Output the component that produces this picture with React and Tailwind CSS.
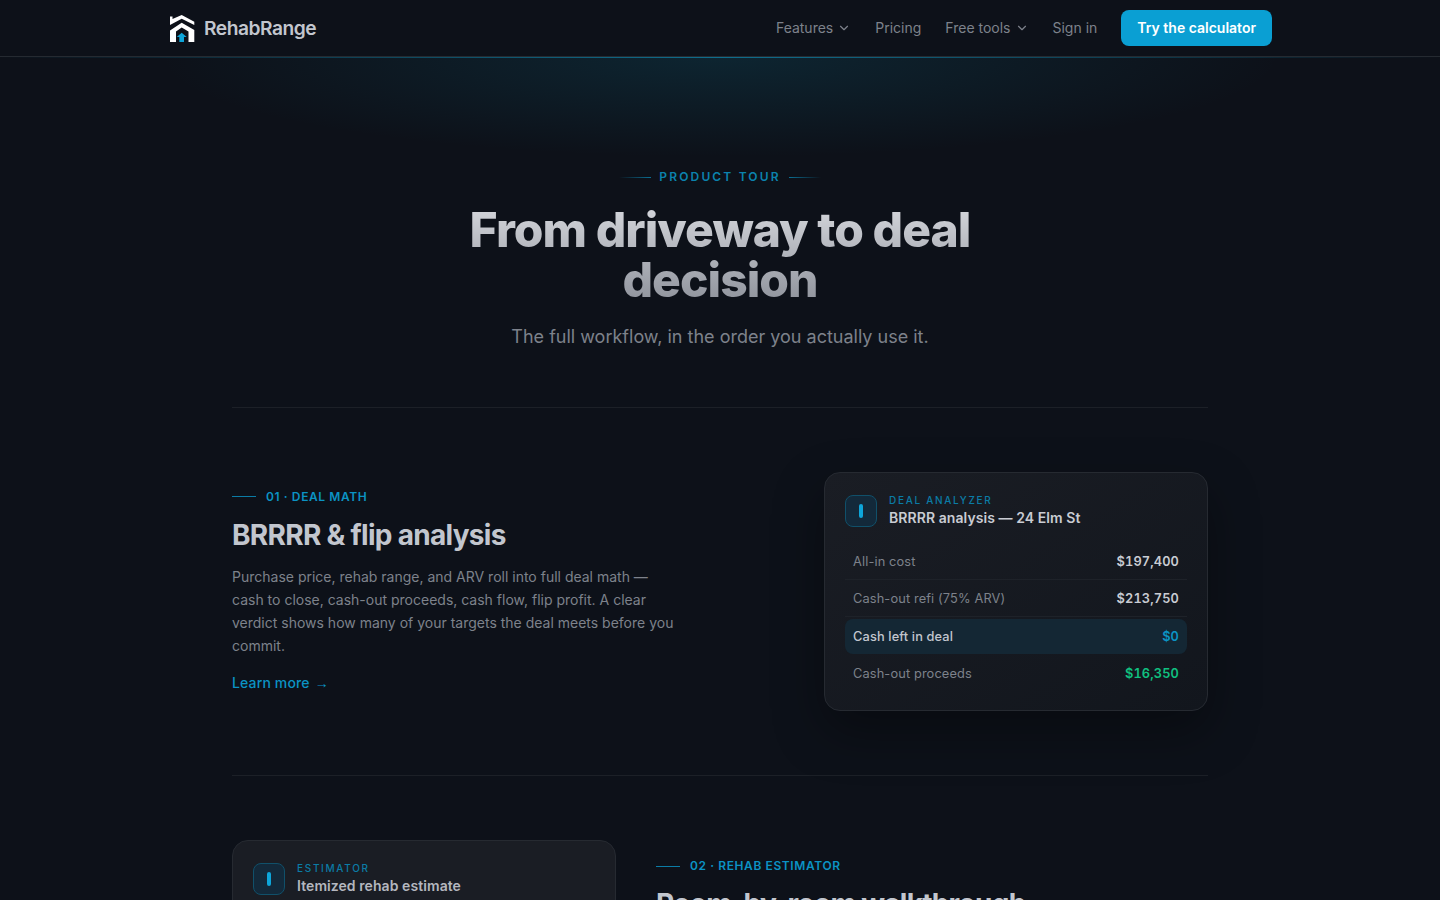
import { ChevronDown } from "lucide-react";

function Logo() {
  return (
    <svg width="28" height="30" viewBox="0 0 28 30" fill="none">
      <path d="M2 3.5 H4.5 V6 L13.7 2 L26.3 8.7 V12 L13.7 5.7 L2 12 Z" fill="#fff" />
      <path d="M13.7 9.7 L26.3 17 V29 H20.5 V18.5 L13.7 14.5 L8 18.5 V29 H2 V17.5 Z" fill="#fff" />
      <path d="M13.7 19.7 L18.7 24 H16 V29 H11.3 V24 H8.7 Z" fill="#0ea5d9" />
    </svg>
  );
}

function Eyebrow({ children }) {
  return (
    <div className="flex items-center gap-2.5 text-xs font-semibold tracking-[0.05em] text-[#0b93c4]">
      <span className="h-px w-6 bg-[#0b7ca6]"></span>
      {children}
    </div>
  );
}

function CardHead({ label, title, titleClass = "text-[#c9ccd3]" }) {
  return (
    <div className="flex h-9 items-center gap-3">
      <div className="flex h-8 w-8 items-center justify-center rounded-lg border border-[#10506a] bg-[#13293a]">
        <span className="h-3.5 w-1 rounded-full bg-[#0ea5d9]"></span>
      </div>
      <div className="-mt-[3px]">
        <div className="text-[10px] leading-4 font-medium tracking-[0.17em] text-[#0b7ca6]">{label}</div>
        <div className={`text-sm leading-5 font-semibold tracking-[0.005em] ${titleClass}`}>{title}</div>
      </div>
    </div>
  );
}

function Row({ label, value, valueClass = "text-[#c9ccd3]", border = true }) {
  return (
    <div className={`flex h-[37px] items-center justify-between px-2 pt-0.5 text-[12.8px] tracking-[0.01em] ${border ? "border-b border-[#1e2229]" : ""}`}>
      <span className="text-[#7d828b]">{label}</span>
      <span className={`font-semibold tabular-nums ${valueClass}`}>{value}</span>
    </div>
  );
}

export default function App() {
  return (
    <div className="relative h-screen overflow-hidden bg-[#0d1119] font-['Inter',sans-serif]">
      {/* top glow */}
      <div className="pointer-events-none absolute inset-x-0 top-[57px] h-[110px] bg-[radial-gradient(ellipse_560px_100px_at_50%_0%,rgba(14,116,144,0.2),transparent)]"></div>
      <div className="pointer-events-none absolute inset-x-0 top-[57px] h-px bg-gradient-to-r from-transparent via-[#0e6d8c] to-transparent"></div>

      <header className="relative h-[57px] border-b border-[#252a31]">
        <div className="mx-auto flex h-14 max-w-[1104px] items-center justify-between">
          <div className="flex items-center gap-2">
            <Logo />
            <span className="text-[19.2px] font-semibold tracking-tight text-[#c2c6ce]">RehabRange</span>
          </div>
          <nav className="flex items-center gap-6 text-sm text-[#7d828b]">
            <span className="flex items-center gap-1">Features <ChevronDown size={14} strokeWidth={2} /></span>
            <span>Pricing</span>
            <span className="flex items-center gap-1">Free tools <ChevronDown size={14} strokeWidth={2} /></span>
            <span>Sign in</span>
            <span className="flex h-9 items-center rounded-lg bg-[#0a9fd3] px-4 font-semibold text-white">Try the calculator</span>
          </nav>
        </div>
      </header>

      <main className="relative mx-auto w-[976px]">
        <section className="flex flex-col items-center border-b border-[#1c2027] pt-28 pb-14 text-center">
          <div className="flex items-center gap-2 text-xs leading-4 font-semibold tracking-[0.18em] text-[#0b83ae]">
            <span className="h-px w-8 bg-gradient-to-r from-transparent to-[#0b6f93]"></span>
            PRODUCT TOUR
            <span className="h-px w-8 bg-gradient-to-l from-transparent to-[#0b6f93]"></span>
          </div>
          <h1 className="mt-5 w-[600px] bg-gradient-to-b from-[#d5d7dc] to-[#8e929b] bg-clip-text text-5xl leading-[50px] font-extrabold tracking-[-0.02em] text-transparent">
            From driveway to deal decision
          </h1>
          <p className="mt-[18px] text-lg leading-7 text-[#7d828b]">The full workflow, in the order you actually use it.</p>
        </section>

        <section className="flex items-center justify-between border-b border-[#1c2027] py-16">
          <div className="mb-0.5 w-[448px]">
            <Eyebrow>01 · DEAL MATH</Eyebrow>
            <h2 className="mt-3 text-[28px] leading-9 font-bold tracking-tight text-[#c2c6ce]">BRRRR &amp; flip analysis</h2>
            <p className="mt-3 text-sm leading-[23px] text-[#7d828b]">
              Purchase price, rehab range, and ARV roll into full deal math — cash to close, cash-out proceeds, cash flow, flip profit. A clear verdict shows how many of your targets the deal meets before you commit.
            </p>
            <div className="mt-4 flex items-center gap-[5px] text-sm font-medium tracking-[0.01em] text-[#0b93c4]">
              Learn more <span className="font-['Liberation_Sans',sans-serif]">→</span>
            </div>
          </div>
          <div className="h-[239px] w-[384px] rounded-2xl border border-[#262a31] bg-gradient-to-br from-[#1a1d24] to-[#12161d] p-5 shadow-[0_20px_50px_rgba(0,0,0,0.35)]">
            <CardHead label="DEAL ANALYZER" title="BRRRR analysis — 24 Elm St" />
            <div className="mt-3.5">
              <Row label="All-in cost" value="$197,400" />
              <Row label="Cash-out refi (75% ARV)" value="$213,750" />
              <div className="mt-0.5 flex h-[35px] items-center justify-between rounded-lg bg-[#142734] px-2 text-[12.8px] tracking-[0.01em]">
                <span className="font-medium text-[#c2c6ce]">Cash left in deal</span>
                <span className="font-semibold tabular-nums text-[#0b93c4]">$0</span>
              </div>
              <Row label="Cash-out proceeds" value="$16,350" valueClass="text-[#10c080]" border={false} />
            </div>
          </div>
        </section>

        <section className="flex gap-10 py-16">
          <div className="h-[239px] w-[384px] shrink-0 rounded-2xl border border-[#262a31] bg-[#1a1d24] p-5">
            <CardHead label="ESTIMATOR" title="Itemized rehab estimate" titleClass="text-[#b4b7bf]" />
          </div>
          <div className="pt-[18px]">
            <Eyebrow>02 · REHAB ESTIMATOR</Eyebrow>
            <h2 className="mt-3 text-[28px] leading-9 font-bold tracking-tight text-[#c2c6ce]">Room-by-room walkthrough</h2>
          </div>
        </section>
      </main>
    </div>
  );
}
